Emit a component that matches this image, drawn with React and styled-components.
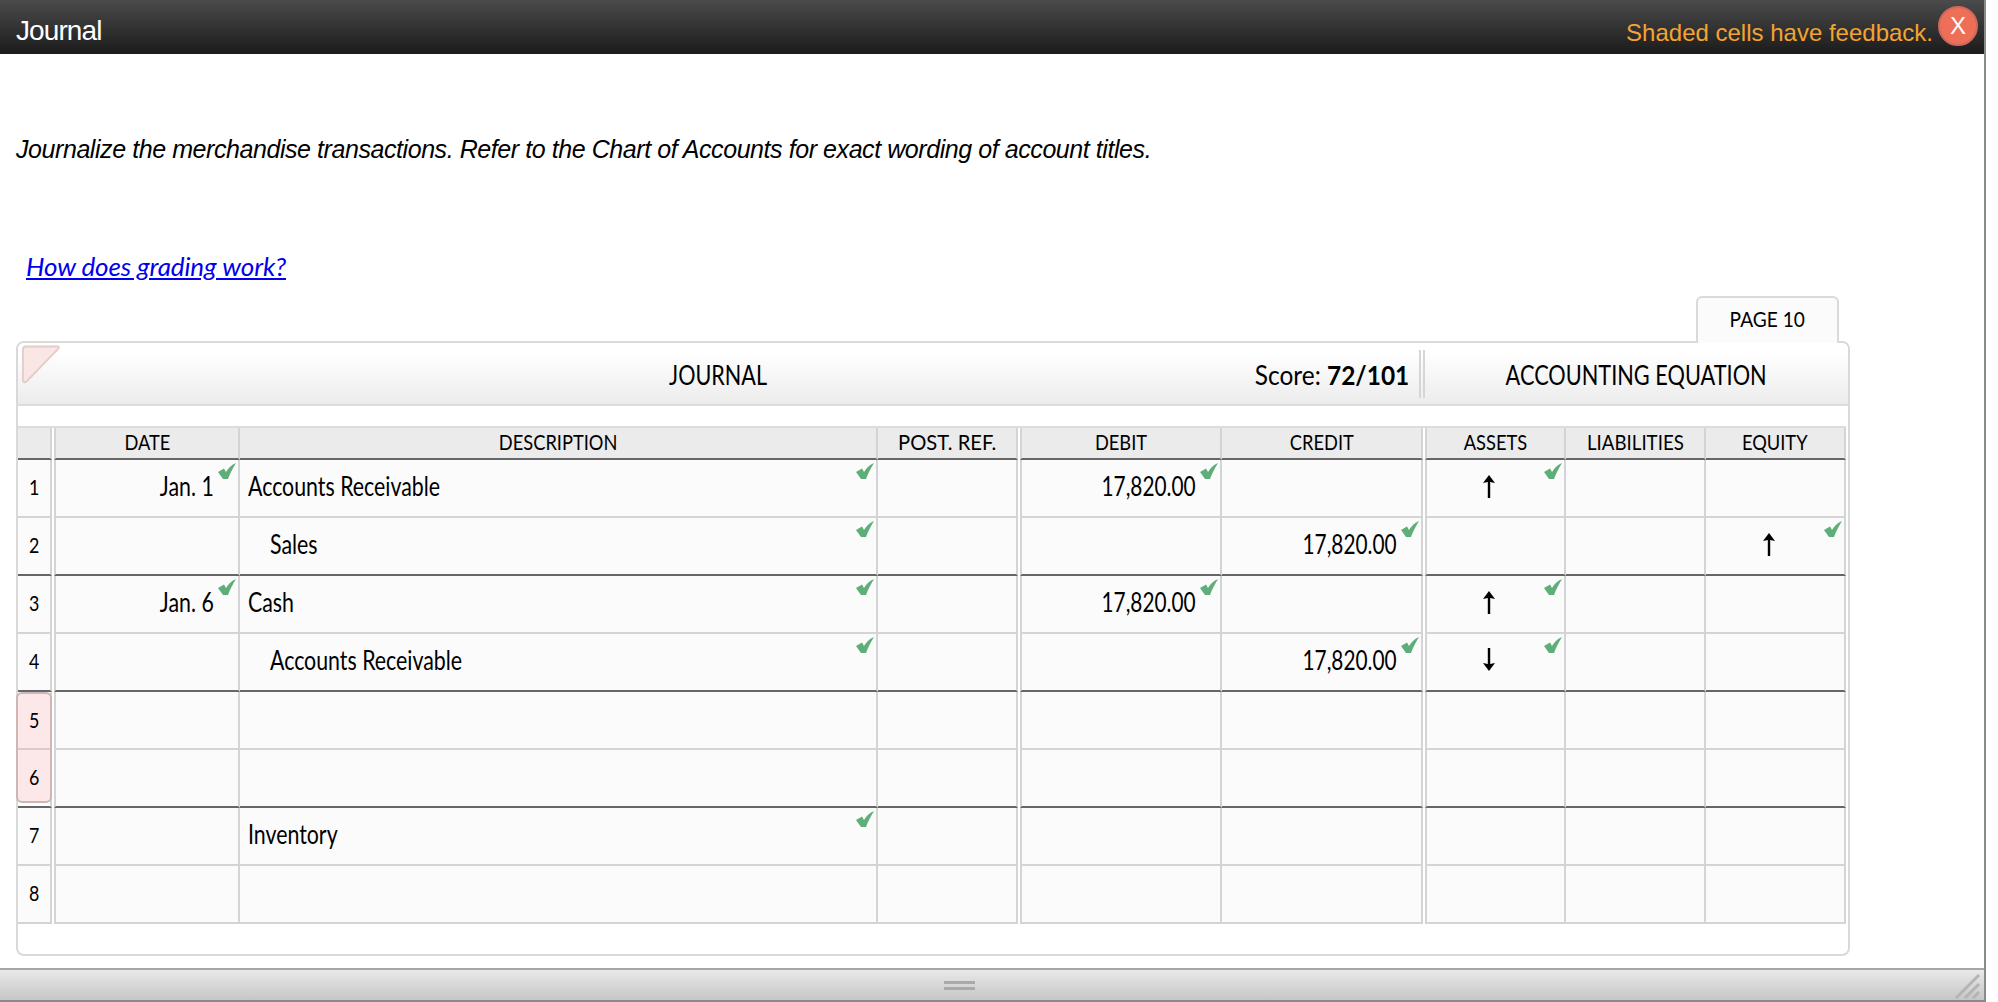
import React from 'react';
import styled, { createGlobalStyle } from 'styled-components';

const Global = createGlobalStyle`
	html, body { margin: 0; padding: 0; background: #fff; }
	* { box-sizing: border-box; }
`;

const PT = `"Lato", "Liberation Sans", sans-serif`;

const Window = styled.div`
	width: 1986px;
	height: 1002px;
	display: flex;
	flex-direction: column;
	border-right: 2px solid #8a8a8a;
	overflow: hidden;
	color: #000;
`;

const TitleBar = styled.header`
	height: 54px;
	flex: none;
	display: flex;
	align-items: flex-start;
	justify-content: space-between;
	padding: 6px 6px 0 16px;
	background: linear-gradient(#4b4b4b, #1b1b1b);
	font-family: "Liberation Sans", Arial, sans-serif;
`;

const Title = styled.h1`
	margin: 5px 0 0;
	font-size: 28px;
	line-height: 40px;
	font-weight: 400;
	letter-spacing: -0.9px;
	color: #fff;
`;

const Feedback = styled.div`
	display: flex;
	align-items: flex-start;
	gap: 5px;
`;

const FeedbackText = styled.span`
	margin-top: 7px;
	font-size: 24px;
	line-height: 40px;
	color: #f3a431;
`;

const CloseButton = styled.button`
	width: 40px;
	height: 40px;
	padding: 0;
	border-radius: 50%;
	border: 2px solid #cf675a;
	background: #ee6f58;
	color: #fff;
	font: 400 24px/34px "Liberation Sans", Arial, sans-serif;
`;

const Main = styled.main`
	flex: 1;
	padding-left: 16px;
`;

const Instruction = styled.p`
	margin: 80px 0 0;
	height: 30px;
	font: italic 400 25px/30px "Liberation Sans", Arial, sans-serif;
	letter-spacing: -0.43px;
`;

const HelpLink = styled.a`
	display: block;
	margin: 87px 0 0 10px;
	height: 30px;
	font: italic 400 26px/30px ${PT};
	letter-spacing: -0.1px;
	color: #0000ee;
	text-decoration: underline;
`;

const TabRow = styled.div`
	display: flex;
	justify-content: flex-end;
	width: 1823px;
	margin-top: 15px;
`;

const Tab = styled.div`
	position: relative;
	z-index: 1;
	width: 143px;
	height: 47px;
	margin-bottom: -2px;
	padding-bottom: 5px;
	display: flex;
	align-items: center;
	justify-content: center;
	background: #fbfbfb;
	border: 2px solid #dadada;
	border-bottom: 0;
	border-radius: 6px 6px 0 0;
	font: 400 22px ${PT};
`;

const Panel = styled.section`
	width: 1834px;
	height: 615px;
	border: 2px solid #d9d9d9;
	border-radius: 8px;
	background: #fff;
`;

const PanelHeader = styled.div`
	position: relative;
	height: 63px;
	display: flex;
	align-items: center;
	border-bottom: 2px solid #dcdcdc;
	border-radius: 6px 6px 0 0;
	background: linear-gradient(#fff 15%, #ececec);
	font: 400 26px ${PT};
`;

const Corner = styled.svg`
	position: absolute;
	left: 3px;
	top: 2px;
`;

const JournalHeading = styled.div`
	width: 1403px;
	position: relative;
	height: 48px;
	padding-top: 2px;
	display: flex;
	align-items: center;
	justify-content: center;
	border-right: 2px solid #d6d6d6;
`;

const Score = styled.span`
	position: absolute;
	right: 10px;
	b { font-weight: 700; }
`;

const EquationHeading = styled.div`
	flex: 1;
	height: 48px;
	padding-top: 2px;
	margin-left: 2px;
	display: flex;
	align-items: center;
	justify-content: center;
	border-left: 2px solid #d6d6d6;
`;

const Sheet = styled.div`
	margin: 20px 0 0;
	width: 1828px;
	display: grid;
	grid-template-columns: 34px 188px 638px 140px 204px 201px 143px 140px 140px;
	grid-template-rows: 32px repeat(8, 58px);
	border-top: 2px solid #dcdcdc;
	font-family: ${PT};
	background: #fff;
`;

// The sheet's typeface is a good deal narrower than anything installed
const Narrow = styled.span`
	display: inline-block;
	white-space: nowrap;
	transform: scaleX(${p => p.$scale || 0.82});
	transform-origin: ${p => p.$origin || 'center'};
`;

const HeadCell = styled.div`
	display: flex;
	align-items: center;
	justify-content: center;
	background: #ebebeb;
	border-bottom: 2px solid #666;
	border-right: 2px solid #d4d4d4;
	margin-left: ${p => (p.$double ? '2px' : '0')};
	border-left: ${p => (p.$double ? '2px solid #d4d4d4' : '0')};
	font-size: 21px;
	padding-bottom: 3px;
`;

const Cell = styled.div`
	position: relative;
	display: flex;
	align-items: center;
	justify-content: ${p => (p.$align === 'right' ? 'flex-end' : p.$align === 'center' ? 'center' : 'flex-start')};
	padding: ${p => (p.$align === 'right' ? '0 24px 4px 0' : p.$align === 'center' ? '0 13px 4px 0' : `0 0 4px ${p.$indent ? 30 : 8}px`)};
	background: #fbfbfb;
	border-bottom: 2px solid ${p => (p.$heavy ? '#666' : '#d4d4d4')};
	border-right: 2px solid #d4d4d4;
	margin-left: ${p => (p.$double ? '2px' : '0')};
	border-left: ${p => (p.$double ? '2px solid #d4d4d4' : '0')};
	font-size: 26px;
`;

const RowNumber = styled(Cell)`
	justify-content: center;
	padding: 0 0 3px;
	font-size: 21px;
`;

const FlagCell = styled.div`
	grid-row: span 2;
	display: flex;
	flex-direction: column;
	padding-bottom: 3px;
	background: #fff;
	border-bottom: 2px solid #666;
	border-right: 2px solid #d4d4d4;
	font-size: 21px;
`;

const FlagBox = styled.div`
	flex: 1;
	margin: 0 -2px;
	display: grid;
	grid-template-rows: 1fr 1fr;
	background: #fce8e8;
	border: 2px solid #cdb6b6;
	border-radius: 6px;
`;

const FlagNumber = styled.div`
	display: flex;
	align-items: center;
	justify-content: center;
	padding-bottom: 3px;
	& + & {
		padding: 3px 0 0;
		border-top: 2px solid #dccaca;
	}
`;

const CheckMark = styled.svg`
	position: absolute;
	top: 3px;
	right: 2px;
`;

const Footer = styled.footer`
	position: relative;
	height: 34px;
	flex: none;
	display: flex;
	align-items: center;
	justify-content: center;
	border-top: 2px solid #a6a6a6;
	border-bottom: 2px solid #8a8a8a;
	background: linear-gradient(#e9e9e9, #c6c6c6);
`;

const Grip = styled.div`
	width: 31px;
	height: 9px;
	margin-left: -65px;
	border-top: 3px solid #aaa;
	border-bottom: 3px solid #aaa;
`;

const Resize = styled.svg`
	position: absolute;
	right: 2px;
	bottom: 0;
`;

const Check = () => (
	<CheckMark width="18" height="16" viewBox="0 0 18 16">
		<path d="M0 9 L6 5.5 L8 9 C10 5.5 13 2 18 0 C15 5 12 10 10 16 L5 16 Z" fill="#5dae78" />
	</CheckMark>
);

const Arrow = ({ down }) => (
	<svg width="14" height="24" viewBox="0 0 14 24" style={{ transform: down ? 'rotate(180deg)' : undefined }}>
		<path d="M7 1 L13 9 L8.2 8 L8.2 24 L5.8 24 L5.8 8 L1 9 Z" fill="#000" />
	</svg>
);

const HEADS = [
	['DATE', true, 0.87], ['DESCRIPTION', false, 0.87], ['POST. REF.', false, 0.96], ['DEBIT', true, 0.87], ['CREDIT', false, 0.87],
	['ASSETS', true, 0.87], ['LIABILITIES', false, 0.89], ['EQUITY', false, 0.87]
];

const ROWS = [
	{ date: 'Jan. 1', desc: 'Accounts Receivable', debit: '17,820.00', assets: 'up' },
	{ desc: 'Sales', indent: true, credit: '17,820.00', equity: 'up' },
	{ date: 'Jan. 6', desc: 'Cash', debit: '17,820.00', assets: 'up' },
	{ desc: 'Accounts Receivable', indent: true, credit: '17,820.00', assets: 'down' },
	{},
	{},
	{ desc: 'Inventory' },
	{}
];

const Row = ({ row, index }) => {
	const n = index + 1;
	const heavy = n % 2 === 0 && n < 8;
	return (
		<>
			{n === 5 && (
				<FlagCell>
					<FlagBox>
						<FlagNumber><Narrow $scale={0.85}>5</Narrow></FlagNumber>
						<FlagNumber><Narrow $scale={0.85}>6</Narrow></FlagNumber>
					</FlagBox>
				</FlagCell>
			)}
			{n !== 5 && n !== 6 && <RowNumber $heavy={heavy}><Narrow $scale={0.85}>{n}</Narrow></RowNumber>}
			<Cell $double $heavy={heavy} $align="right">
				{row.date && <Narrow $origin="right">{row.date}</Narrow>}
				{row.date && <Check />}
			</Cell>
			<Cell $heavy={heavy} $indent={row.indent}>
				{row.desc && <Narrow $origin="left">{row.desc}</Narrow>}
				{row.desc && <Check />}
			</Cell>
			<Cell $heavy={heavy} />
			<Cell $double $heavy={heavy} $align="right">
				{row.debit && <Narrow $origin="right" $scale={0.8}>{row.debit}</Narrow>}
				{row.debit && <Check />}
			</Cell>
			<Cell $heavy={heavy} $align="right">
				{row.credit && <Narrow $origin="right" $scale={0.8}>{row.credit}</Narrow>}
				{row.credit && <Check />}
			</Cell>
			<Cell $double $heavy={heavy} $align="center">
				{row.assets && <Arrow down={row.assets === 'down'} />}
				{row.assets && <Check />}
			</Cell>
			<Cell $heavy={heavy} />
			<Cell $heavy={heavy} $align="center">
				{row.equity && <Arrow />}
				{row.equity && <Check />}
			</Cell>
		</>
	);
};

export default function App() {
	return (
		<Window>
			<Global />
			<TitleBar>
				<Title>Journal</Title>
				<Feedback>
					<FeedbackText>Shaded cells have feedback.</FeedbackText>
					<CloseButton>X</CloseButton>
				</Feedback>
			</TitleBar>
			<Main>
				<Instruction>
					Journalize the merchandise transactions. Refer to the Chart of Accounts for exact wording of account titles.
				</Instruction>
				<HelpLink href="#">How does grading work?</HelpLink>
				<TabRow>
					<Tab><Narrow $scale={0.87}>PAGE 10</Narrow></Tab>
				</TabRow>
				<Panel>
					<PanelHeader>
						<Corner width="40" height="40" viewBox="0 0 42 42">
							<path d="M5 1.5 H38 Q41 1.5 39 4 L6 38 Q2 41 2 36 V5 Q2 1.5 5 1.5 Z" fill="#fbe6e6" stroke="#e2cccc" strokeWidth="2" />
						</Corner>
						<JournalHeading>
							<Narrow $scale={0.83}>JOURNAL</Narrow>
							<Score><Narrow $origin="right" $scale={0.94}>Score: <b>72/101</b></Narrow></Score>
						</JournalHeading>
						<EquationHeading><Narrow $scale={0.836}>ACCOUNTING EQUATION</Narrow></EquationHeading>
					</PanelHeader>
					<Sheet>
						<HeadCell />
						{HEADS.map(([label, double, scale]) => (
							<HeadCell key={label} $double={double}><Narrow $scale={scale}>{label}</Narrow></HeadCell>
						))}
						{ROWS.map((row, i) => (
							<Row key={i} row={row} index={i} />
						))}
					</Sheet>
				</Panel>
			</Main>
			<Footer>
				<Grip />
				<Resize width="30" height="30" viewBox="0 0 30 30">
					<path d="M4 28 L27 5 M13 28 L27 14 M21 28 L27 22" stroke="#b4b4b4" strokeWidth="3" fill="none" />
				</Resize>
			</Footer>
		</Window>
	);
}
